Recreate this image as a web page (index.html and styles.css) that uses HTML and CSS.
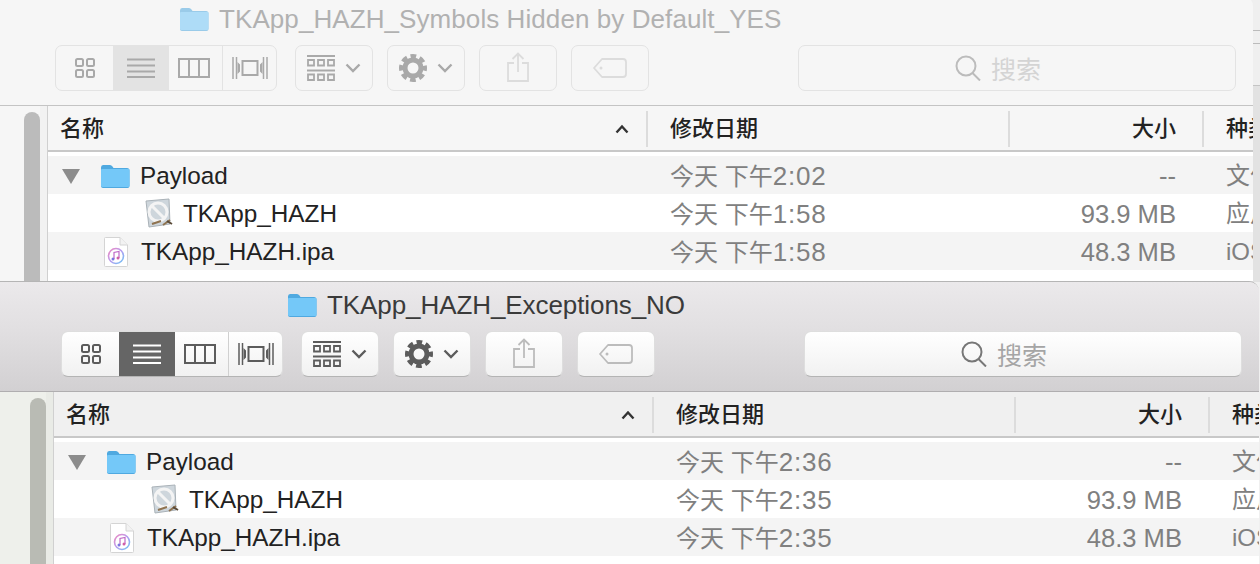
FILE: index.html
```html
<!DOCTYPE html>
<html lang="zh-CN">

<head>
    <meta charset="utf-8">
    <title>Finder</title>
    <link rel="stylesheet" href="styles.css">
</head>

<body>
    <svg class="sprites" width="0" height="0">
        <defs>
            <linearGradient id="g-tunes" x1="0" y1="0" x2="1" y2="1">
                <stop offset="0" stop-color="#f08ac0"/>
                <stop offset=".5" stop-color="#b59cf0"/>
                <stop offset="1" stop-color="#6cc4f4"/>
            </linearGradient>
        </defs>
        <symbol id="i-folder" viewBox="0 0 30 24">
            <path d="M1 3.500Q1 1 3 1H10Q11.500 1 12.500 2.500L13.500 4H27Q29.500 4 29.500 6.500V22Q29.500 24 27.500 24H3Q1 24 1 22Z" fill="#4fa9e0"/>
            <path d="M1 6Q1 5 2 5H28.500Q29.500 5 29.500 6V21.500Q29.500 23 28 23H2.500Q1 23 1 21.500Z" fill="#74c8f8"/>
        </symbol>
        <symbol id="i-icons" viewBox="0 0 20 20">
            <g fill="none" stroke="currentColor" stroke-width="2">
                <rect x="1" y="1" width="7" height="7" rx="1.500"/>
                <rect x="12" y="1" width="7" height="7" rx="1.500"/>
                <rect x="1" y="12" width="7" height="7" rx="1.500"/>
                <rect x="12" y="12" width="7" height="7" rx="1.500"/>
            </g>
        </symbol>
        <symbol id="i-list" viewBox="0 0 28 20">
            <path d="M0 1.500H28M0 7.500H28M0 13.500H28M0 19H28" stroke="currentColor" stroke-width="2"/>
        </symbol>
        <symbol id="i-columns" viewBox="0 0 32 20">
            <path d="M1 1H31V19H1ZM11 1V19M21 1V19" fill="none" stroke="currentColor" stroke-width="2"/>
        </symbol>
        <symbol id="i-cover" viewBox="0 0 36 22">
            <g fill="none" stroke="currentColor" stroke-width="1.500">
                <rect x="10.500" y="4" width="15" height="14" stroke-width="2"/>
                <path d="M1 0V22M4.500 0V22M31.500 0V22M35 0V22"/>
            </g>
            <path d="M5.500 5L8 7.500V14.500L5.500 17ZM30.500 5L28 7.500V14.500L30.500 17Z" fill="currentColor"/>
        </symbol>
        <symbol id="i-arrange" viewBox="0 0 28 26">
            <path d="M0 1H28M0 15.500H28" stroke="currentColor" stroke-width="1.800"/>
            <path d="M1 5H7V10.500H1ZM11 5H17V10.500H11ZM21 5H27V10.500H21ZM1 19.500H7V25H1ZM11 19.500H17V25H11ZM21 19.500H27V25H21Z" fill="none" stroke="currentColor" stroke-width="1.800"/>
        </symbol>
        <symbol id="i-chevron" viewBox="0 0 16 10">
            <path d="M1.500 1.500L8 8L14.500 1.500" fill="none" stroke="currentColor" stroke-width="2.400"/>
        </symbol>
        <symbol id="i-gear" viewBox="0 0 28 28">
            <circle cx="14" cy="14" r="8" fill="none" stroke="currentColor" stroke-width="5"/>
            <circle cx="14" cy="14" r="11.500" fill="none" stroke="currentColor" stroke-width="5" stroke-dasharray="5.500 3.530" stroke-dashoffset="2.750"/>
        </symbol>
        <symbol id="i-share" viewBox="0 0 22 30">
            <path d="M7 11H1V29H21V11H15M11 20V1.500M5.500 7L11 1.500L16.500 7" fill="none" stroke="currentColor" stroke-width="1.800"/>
        </symbol>
        <symbol id="i-tag" viewBox="0 0 34 20">
            <path d="M9 1H30Q33 1 33 4V16Q33 19 30 19H9L1 10Z" fill="none" stroke="currentColor" stroke-width="1.800" stroke-linejoin="round"/>
            <circle cx="8" cy="10" r="1.500" fill="currentColor"/>
        </symbol>
        <symbol id="i-search" viewBox="0 0 26 26">
            <circle cx="11" cy="11" r="9.500" fill="none" stroke="currentColor" stroke-width="2"/>
            <path d="M17.500 18L25 25.500" stroke="currentColor" stroke-width="2"/>
        </symbol>
        <symbol id="i-sort" viewBox="0 0 14 10">
            <path d="M1.500 8.500L7 2.500L12.500 8.500" fill="none" stroke="#333" stroke-width="2.400"/>
        </symbol>
        <symbol id="i-app" viewBox="0 0 28 32">
            <path d="M1 3L24 1L25 26L4 29Z" fill="#ced6dc" stroke="#aab2b8"/>
            <circle cx="13" cy="14" r="9" fill="none" stroke="#f4f4f4" stroke-width="3"/>
            <path d="M7 8L19 20" stroke="#f4f4f4" stroke-width="3"/>
            <path d="M7 26L16 23M18 27L25 22" stroke="#8f7350" stroke-width="2"/>
            <path d="M22 23L27 26" stroke="#5a4a38" stroke-width="2"/>
        </symbol>
        <symbol id="i-ipa" viewBox="0 0 24 30">
            <path d="M.500 1.500Q.500 .500 1.500 .500H16L23.500 8V28.500Q23.500 29.500 22.500 29.500H1.500Q.500 29.500 .500 28.500Z" fill="#fff" stroke="#d4d4d4"/>
            <path d="M16 .500V8H23.500" fill="#f2f2f2" stroke="#d4d4d4"/>
            <circle cx="12" cy="19" r="7.500" fill="#fff" stroke="url(#g-tunes)" stroke-width="1.600"/>
            <path d="M10 22V15.500L15 14.500V21" fill="none" stroke="#c06ac8" stroke-width="1.200"/>
            <circle cx="9" cy="22" r="1.500" fill="#7a76e0"/>
            <circle cx="14" cy="21" r="1.500" fill="#d05fa8"/>
        </symbol>
    </svg>

    <div class="backdrop"></div>

    <section class="window window-back">
        <header class="titlebar">
            <svg class="title-icon"><use href="#i-folder"/></svg>
            <span class="title-text">TKApp_HAZH_Symbols Hidden by Default_YES</span>
        </header>
        <div class="toolbar">
            <div class="segments">
                <span class="seg seg-icons"><svg class="ic-icons"><use href="#i-icons"/></svg></span>
                <span class="seg seg-list on"><svg class="ic-list"><use href="#i-list"/></svg></span>
                <span class="seg seg-columns"><svg class="ic-columns"><use href="#i-columns"/></svg></span>
                <span class="seg seg-cover"><svg class="ic-cover"><use href="#i-cover"/></svg></span>
            </div>
            <span class="btn"><svg class="ic-arrange"><use href="#i-arrange"/></svg><svg class="ic-chevron"><use href="#i-chevron"/></svg></span>
            <span class="btn"><svg class="ic-gear"><use href="#i-gear"/></svg><svg class="ic-chevron"><use href="#i-chevron"/></svg></span>
            <span class="btn dim"><svg class="ic-share"><use href="#i-share"/></svg></span>
            <span class="btn dim"><svg class="ic-tag"><use href="#i-tag"/></svg></span>
            <div class="search"><svg class="ic-search"><use href="#i-search"/></svg><span>搜索</span></div>
        </div>
        <div class="body">
            <aside class="sidebar"><div class="thumb"></div></aside>
            <div class="files">
                <div class="head">
                    <div class="col-name">名称<svg class="ic-sort"><use href="#i-sort"/></svg></div>
                    <div class="col-date">修改日期</div>
                    <div class="col-size">大小</div>
                    <div class="col-kind">种类</div>
                </div>
                <div class="row alt">
                    <div class="col-name"><span class="twist"></span><svg class="ic-folder"><use href="#i-folder"/></svg><span class="name">Payload</span></div>
                    <div class="col-date">今天 下午<span class="time">2:02</span></div>
                    <div class="col-size">--</div>
                    <div class="col-kind">文件夹</div>
                </div>
                <div class="row">
                    <div class="col-name nested"><svg class="ic-app"><use href="#i-app"/></svg><span class="name">TKApp_HAZH</span></div>
                    <div class="col-date">今天 下午<span class="time">1:58</span></div>
                    <div class="col-size">93.9 MB</div>
                    <div class="col-kind">应用程序</div>
                </div>
                <div class="row alt">
                    <div class="col-name file"><svg class="ic-ipa"><use href="#i-ipa"/></svg><span class="name">TKApp_HAZH.ipa</span></div>
                    <div class="col-date">今天 下午<span class="time">1:58</span></div>
                    <div class="col-size">48.3 MB</div>
                    <div class="col-kind">iOS App</div>
                </div>
            </div>
        </div>
    </section>

    <section class="window window-front">
        <header class="titlebar">
            <svg class="title-icon"><use href="#i-folder"/></svg>
            <span class="title-text">TKApp_HAZH_Exceptions_NO</span>
        </header>
        <div class="toolbar">
            <div class="segments">
                <span class="seg seg-icons"><svg class="ic-icons"><use href="#i-icons"/></svg></span>
                <span class="seg seg-list on"><svg class="ic-list"><use href="#i-list"/></svg></span>
                <span class="seg seg-columns"><svg class="ic-columns"><use href="#i-columns"/></svg></span>
                <span class="seg seg-cover"><svg class="ic-cover"><use href="#i-cover"/></svg></span>
            </div>
            <span class="btn"><svg class="ic-arrange"><use href="#i-arrange"/></svg><svg class="ic-chevron"><use href="#i-chevron"/></svg></span>
            <span class="btn"><svg class="ic-gear"><use href="#i-gear"/></svg><svg class="ic-chevron"><use href="#i-chevron"/></svg></span>
            <span class="btn dim"><svg class="ic-share"><use href="#i-share"/></svg></span>
            <span class="btn dim"><svg class="ic-tag"><use href="#i-tag"/></svg></span>
            <div class="search"><svg class="ic-search"><use href="#i-search"/></svg><span>搜索</span></div>
        </div>
        <div class="body">
            <aside class="sidebar"><div class="thumb"></div></aside>
            <div class="files">
                <div class="head">
                    <div class="col-name">名称<svg class="ic-sort"><use href="#i-sort"/></svg></div>
                    <div class="col-date">修改日期</div>
                    <div class="col-size">大小</div>
                    <div class="col-kind">种类</div>
                </div>
                <div class="row alt">
                    <div class="col-name"><span class="twist"></span><svg class="ic-folder"><use href="#i-folder"/></svg><span class="name">Payload</span></div>
                    <div class="col-date">今天 下午<span class="time">2:36</span></div>
                    <div class="col-size">--</div>
                    <div class="col-kind">文件夹</div>
                </div>
                <div class="row">
                    <div class="col-name nested"><svg class="ic-app"><use href="#i-app"/></svg><span class="name">TKApp_HAZH</span></div>
                    <div class="col-date">今天 下午<span class="time">2:35</span></div>
                    <div class="col-size">93.9 MB</div>
                    <div class="col-kind">应用程序</div>
                </div>
                <div class="row alt">
                    <div class="col-name file"><svg class="ic-ipa"><use href="#i-ipa"/></svg><span class="name">TKApp_HAZH.ipa</span></div>
                    <div class="col-date">今天 下午<span class="time">2:35</span></div>
                    <div class="col-size">48.3 MB</div>
                    <div class="col-kind">iOS App</div>
                </div>
            </div>
        </div>
    </section>
</body>
</html>
```

FILE: styles.css
```css
html,
body {
    margin: 0;
    height: 100%;
    overflow: hidden;
}

body {
    position: relative;
    width: 1260px;
    height: 564px;
    background: #f0f0f0;
    font-family: "Liberation Sans", "Noto Sans CJK SC", sans-serif;
}

.sprites {
    position: absolute;
}

/* window behind both, only a sliver shows on the right */
.backdrop {
    position: absolute;
    left: 1240px;
    top: 0;
    width: 20px;
    height: 282px;
    background: linear-gradient(#efefef 0, #efefef 30px, #bbb 30px, #bbb 31px, #efefef 31px, #efefef 43px, #bbb 43px, #bbb 44px, #efefef 44px, #efefef 85px, #c4c4c4 85px, #c4c4c4 86px, #e2e2e2 86px, #e2e2e2 100%);
}

.window {
    position: absolute;
    width: 1293px;
    display: flex;
    flex-direction: column;
    border-top-right-radius: 10px;
    overflow: hidden;
}

.window-back {
    left: -40px;
    top: -4px;
    height: 285px;
    color: #a9a9a9;
    --edge: #c4c4c4;
    --btn-edge: #e3e3e3;
    --head: #f6f6f6;
    --side: #f6f6f6;
    --gutter: #f2f2f2;
    --thumb: #bbbbbb;
}

.window-front {
    left: -34px;
    top: 281px;
    height: 287px;
    border-top: 1px solid #b5b5b5;
    color: #5c5c5c;
    --edge: #b0aeb0;
    --btn-edge: #d0d0d0;
    --head: #f0f0f0;
    --side: #eef0eb;
    --gutter: #e9ebe6;
    --thumb: #b9bbb4;
}

.titlebar {
    height: 46px;
    padding-bottom: 3px;
    display: flex;
    align-items: center;
    font-size: 26px;
}

.window-back .titlebar {
    padding-left: 219px;
    color: #b1b1b1;
    background: #f6f6f6;
    letter-spacing: .08px;
}

.window-front .titlebar {
    padding-left: 321px;
    color: #3a3a3a;
    background: linear-gradient(#ebe9eb, #e1dfe1);
    letter-spacing: -.08px;
}

.title-icon {
    width: 30px;
    height: 24px;
    margin-right: 10px;
    flex: none;
}

.window-back .title-icon {
    opacity: .55;
}

.toolbar {
    height: 46px;
    padding: 0 17px 14px 95px;
    display: flex;
    align-items: flex-start;
    gap: 14px;
    border-bottom: 1px solid var(--edge);
    background: #f6f6f6;
}

.window-front .toolbar {
    background: linear-gradient(#e1dfe1, #d2d0d2);
}

.segments {
    display: flex;
    width: 222px;
    height: 46px;
    margin-right: 4px;
    box-sizing: border-box;
    border: 1px solid var(--btn-edge);
    border-radius: 7px;
    overflow: hidden;
    background: #f6f6f6;
}

.seg {
    display: flex;
    align-items: center;
    justify-content: center;
    box-sizing: border-box;
    flex: none;
}

.seg-icons {
    width: 57px;
}

.seg-list {
    width: 56px;
}

.seg-columns {
    width: 53px;
    padding-right: 3px;
}

.seg-cover {
    width: 54px;
    border-left: 1px solid var(--btn-edge);
}

.seg.on {
    background: #e3e3e3;
}

.window-front .segments,
.window-front .btn,
.window-front .search {
    border-color: #dedede;
    border-bottom-color: #b4b4b4;
    background: linear-gradient(#ffffff, #f1f1f1);
}

.window-front .seg.on {
    background: #656565;
    color: #fff;
}

.btn {
    display: flex;
    align-items: center;
    justify-content: center;
    gap: 10px;
    width: 78px;
    height: 46px;
    box-sizing: border-box;
    border: 1px solid var(--btn-edge);
    border-radius: 7px;
    background: #f6f6f6;
}

.btn.dim {
    color: #dcdcdc;
}

.window-front .btn.dim {
    color: #bcbcbc;
}

.search {
    margin-left: 135px;
    width: 438px;
    height: 46px;
    box-sizing: border-box;
    padding-right: 38px;
    border: 1px solid var(--btn-edge);
    border-radius: 7px;
    background: #f6f6f6;
    display: flex;
    align-items: center;
    justify-content: center;
    gap: 10px;
    font-size: 25px;
    color: #d4d4d4;
}

.window-front .search {
    color: #a5a5a5;
}

.ic-icons { width: 20px; height: 20px; }
.ic-list { width: 28px; height: 20px; }
.ic-columns { width: 32px; height: 20px; }
.ic-cover { width: 36px; height: 22px; }
.ic-arrange { width: 28px; height: 26px; }
.ic-chevron { width: 16px; height: 10px; }
.ic-gear { width: 28px; height: 28px; }
.ic-share { width: 22px; height: 30px; margin-top: -3px; }
.ic-tag { width: 34px; height: 20px; }
.ic-search { width: 26px; height: 26px; color: #777; }
.window-back .ic-search { color: #bcbcbc; }

.body {
    flex: 1;
    display: flex;
    min-height: 0;
}

.sidebar {
    width: 88px;
    flex: none;
    box-sizing: border-box;
    padding: 6px 0 0 64px;
    background: linear-gradient(to right, var(--side) 80px, var(--gutter) 80px);
    border-right: 1px solid #d0d0d0;
}

.thumb {
    width: 16px;
    height: 400px;
    border-radius: 8px;
    background: var(--thumb);
}

.files {
    flex: 1;
    background: #fff;
    font-size: 24px;
    color: #808080;
}

.head,
.row {
    display: flex;
    align-items: center;
}

.head {
    height: 44px;
    padding-top: 1px;
    box-sizing: border-box;
    height: 46px;
    background: var(--head);
    border-bottom: 2px solid #c8c8c8;
    margin-bottom: 4px;
    font-size: 22px;
    font-weight: 500;
    color: #222;
}

.row {
    height: 38px;
    box-sizing: border-box;
    padding-top: 2px;
}

.alt {
    background: #f4f4f4;
}

.col-name {
    width: 598px;
    box-sizing: border-box;
    padding-left: 12px;
    display: flex;
    align-items: center;
    flex: none;
    color: #222;
}

.col-date,
.col-size,
.col-kind {
    border-left: 2px solid transparent;
    box-sizing: border-box;
    flex: none;
    line-height: 28px;
    white-space: nowrap;
}

.col-date {
    width: 362px;
    padding-left: 22px;
}

.time {
    font-size: 26px;
    letter-spacing: .8px;
}

.col-size {
    width: 194px;
    padding-right: 26px;
    text-align: right;
    font-size: 25.600px;
}

.col-kind {
    padding-left: 22px;
}

.head .col-name,
.head .col-date,
.head .col-size,
.head .col-kind {
    height: 36px;
    line-height: 36px;
    font-size: 22px;
    color: #222;
}

.head .col-date,
.head .col-size,
.head .col-kind {
    border-left-color: #dcdcdc;
}

.ic-sort {
    width: 14px;
    height: 10px;
    margin-left: auto;
    margin-right: 17px;
}

.twist {
    width: 0;
    height: 0;
    margin: 0 20px 0 2px;
    border-left: 9.500px solid transparent;
    border-right: 9.500px solid transparent;
    border-top: 15px solid #8c8c8c;
}

.ic-folder {
    width: 30px;
    height: 24px;
    margin-right: 10px;
}

.name {
    white-space: nowrap;
    font-size: 24.300px;
}

.nested {
    padding-left: 97px;
}

.ic-app {
    width: 28px;
    height: 32px;
    margin-right: 10px;
}

.file {
    padding-left: 56px;
}

.ic-ipa {
    width: 24px;
    height: 30px;
    margin-right: 13px;
}
```
